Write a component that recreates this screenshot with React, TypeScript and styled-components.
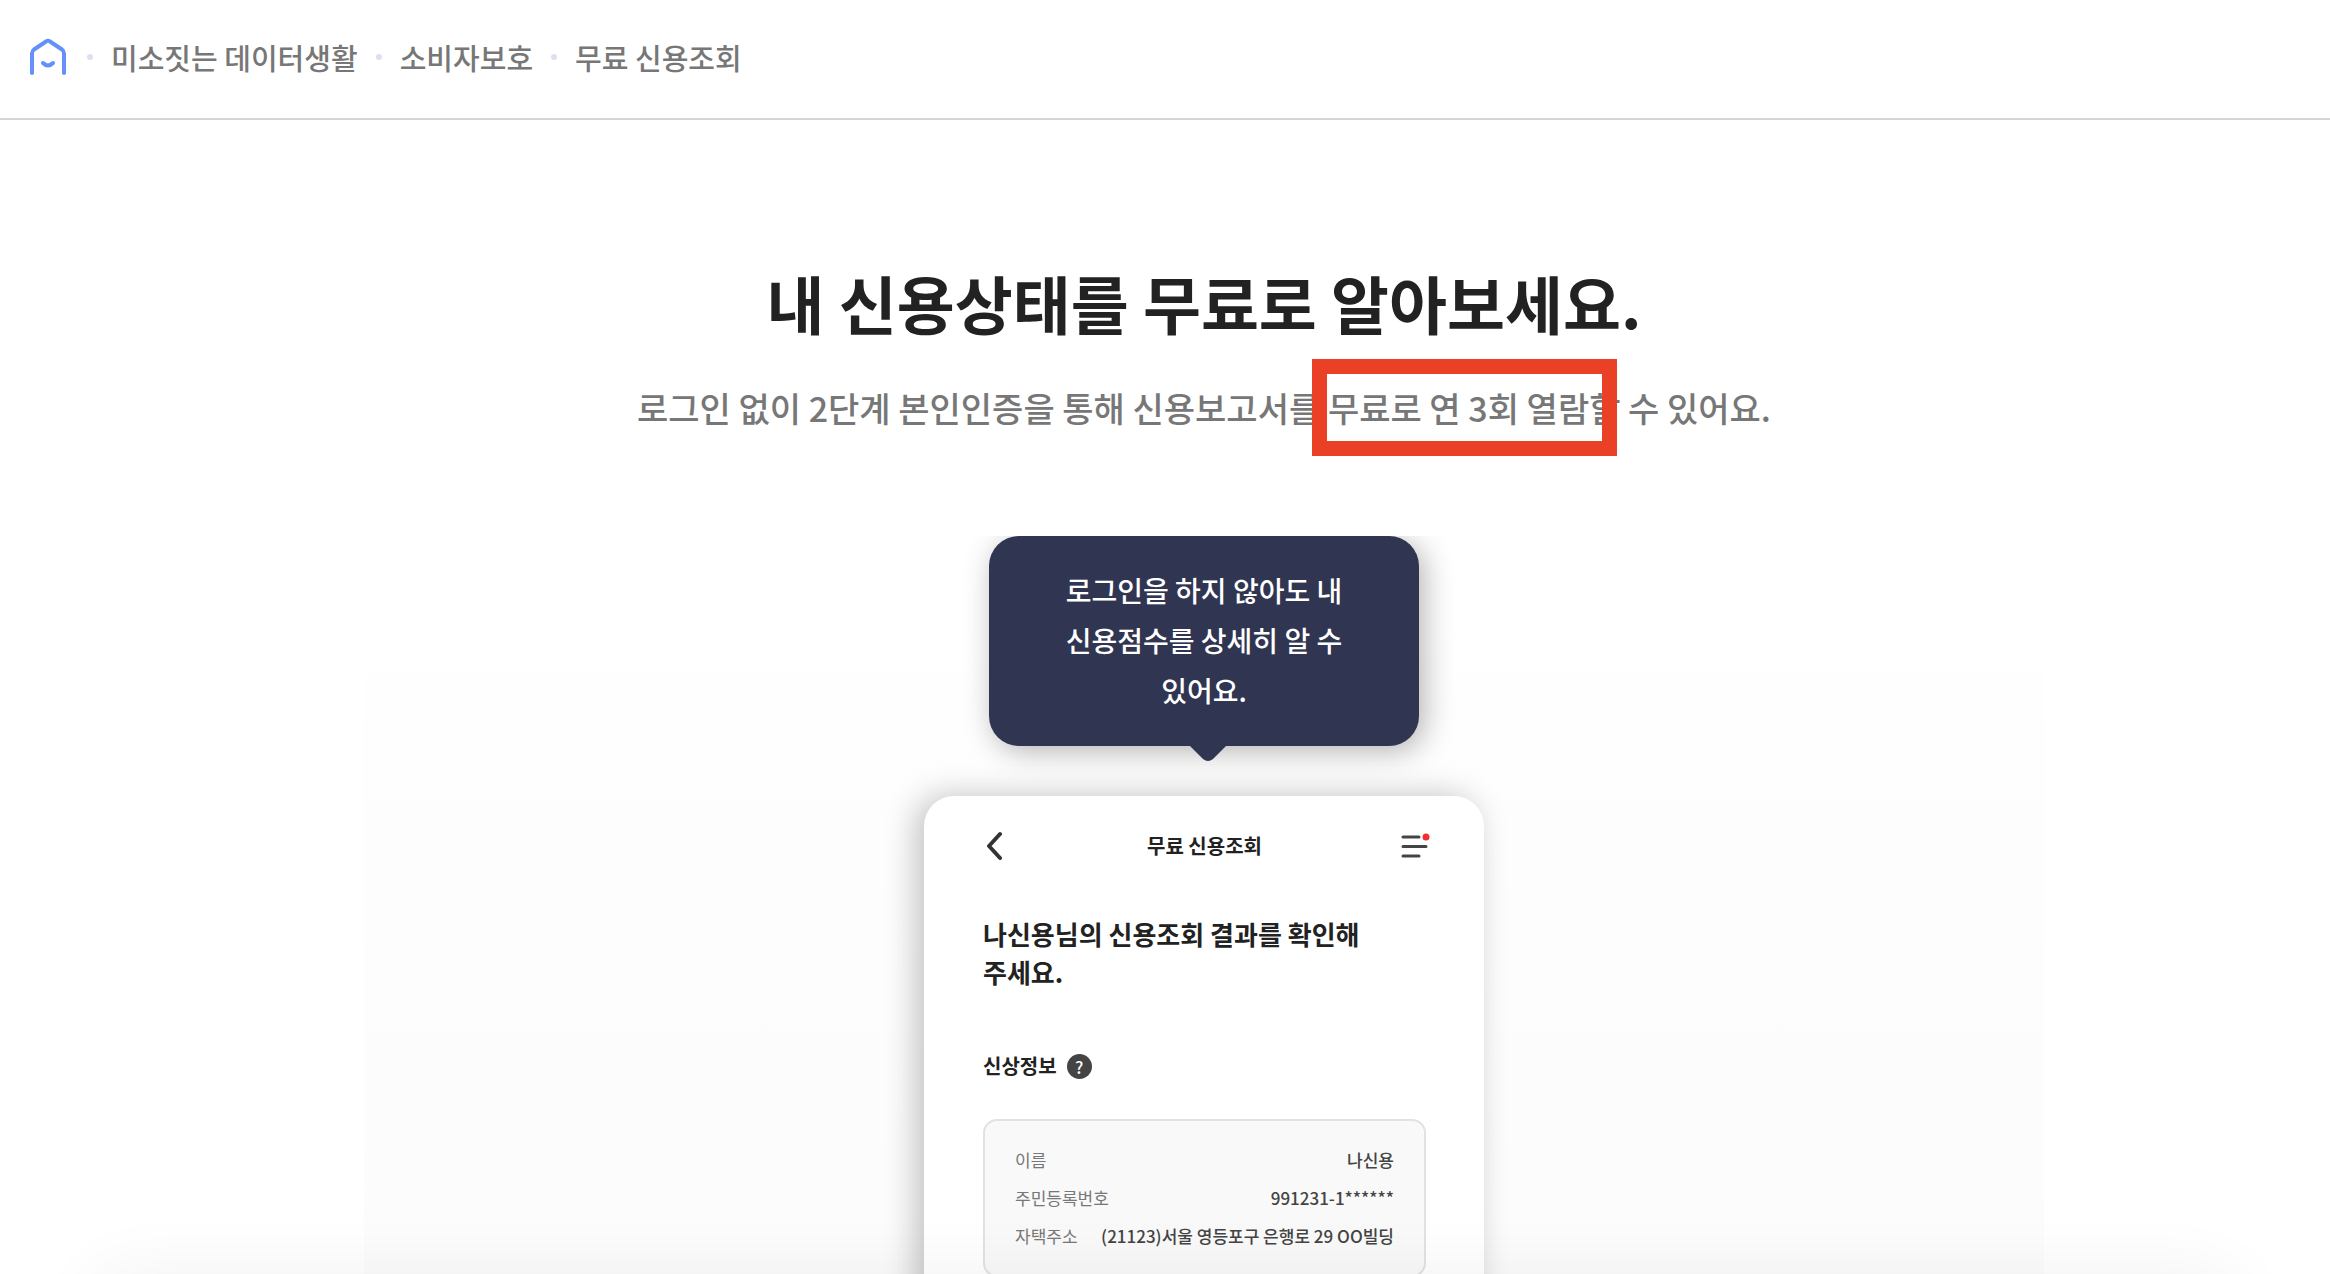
import React from 'react';
import styled, { createGlobalStyle } from 'styled-components';

const GlobalStyle = createGlobalStyle`
  *, *::before, *::after { box-sizing: border-box; }
  body {
    margin: 0;
    background: #fff;
    color: #222;
    font-family: "Noto Sans CJK KR", "Noto Sans", sans-serif;
    word-break: keep-all;
  }
  h1, h2, h3, p, dl, dt, dd, ol { margin: 0; padding: 0; }
  button { border: 0; padding: 0; background: none; font: inherit; color: inherit; cursor: pointer; }
`;

const Page = styled.div`
  position: relative;
  display: flex;
  flex-direction: column;
  height: 100vh;
  overflow: hidden;
`;

const Header = styled.header`
  flex: none;
  border-bottom: 2px solid #d6d6d6;
  padding: 32px 29px 36px;
`;

const Crumbs = styled.ol`
  display: flex;
  align-items: center;
  list-style: none;
`;

const Crumb = styled.li`
  display: flex;
  align-items: center;

  & + &::before {
    content: '';
    width: 6px;
    height: 6px;
    margin: 0 18px;
    border-radius: 50%;
    background: #dfdff2;
  }
`;

const CrumbLink = styled.a`
  display: flex;
  align-items: center;
  height: 50px;
  font-size: 29px;
  line-height: 50px;
  font-weight: 500;
  color: #777;
  text-decoration: none;
`;

const Main = styled.main`
  flex: 1 0 auto;
  display: flex;
  flex-direction: column;
  align-items: center;
  padding: 137px 0 0 78px;
`;

const Title = styled.h1`
  font-size: 63px;
  line-height: 90px;
  font-weight: 700;
`;

const Lead = styled.p`
  margin-top: 36px;
  font-size: 34px;
  line-height: 50px;
  font-weight: 500;
  color: #777;
`;

const Marked = styled.span`
  position: relative;

  &::after {
    content: '';
    position: absolute;
    inset: -24px -28px -24px -16px;
    border: 15px solid #ea4025;
  }
`;

const Stage = styled.section`
  display: flex;
  flex-direction: column;
  align-items: center;
  gap: 50px;
  width: 100%;
  max-width: 1680px;
  margin-top: 103px;
  padding-bottom: 60px;
  overflow: hidden;
  background: linear-gradient(#fff 100px, #fefefe 160px, #fdfdfd 400px, #fbfbfb 100%);
`;

const Bubble = styled.div`
  position: relative;
  z-index: 1;
  width: 430px;
  padding: 29px 60px 31px;
  border-radius: 30px;
  background: #303551;
  box-shadow: 5px 5px 30px rgba(0, 0, 0, 0.3);
  color: #fff;
  text-align: center;
  font-size: 28px;
  line-height: 50px;
  font-weight: 500;
`;

const Tail = styled.svg`
  position: absolute;
  top: 100%;
  left: 50%;
  width: 36px;
  height: 15px;
  margin-left: -14px;
  display: block;
`;

const Phone = styled.article`
  width: 560px;
  min-height: 700px;
  padding: 35px 58px 36px 59px;
  border-radius: 30px;
  background: #fff;
  box-shadow: -8px 0 32px rgba(0, 0, 0, 0.24);
`;

const PhoneBar = styled.div`
  display: grid;
  grid-template-columns: 1fr auto 1fr;
  align-items: center;
  height: 30px;
  margin: 0 -4px;
  padding-left: 8px;
`;

const PhoneTitle = styled.h2`
  margin-right: 8px;
  font-size: 20px;
  line-height: 30px;
  font-weight: 700;
`;

const IconButton = styled.button<{ $end?: boolean }>`
  display: flex;
  justify-self: ${(p) => (p.$end ? 'end' : 'start')};
`;

const Result = styled.p`
  margin-top: 54px;
  font-size: 26px;
  line-height: 38px;
  font-weight: 700;
`;

const SectionHead = styled.div`
  display: flex;
  align-items: center;
  gap: 10px;
  margin-top: 60px;
`;

const SectionTitle = styled.h3`
  font-size: 20px;
  line-height: 30px;
  font-weight: 700;
`;

const Help = styled.button`
  width: 25px;
  height: 25px;
  border-radius: 50%;
  background: #444;
  color: #fff;
  font-size: 17px;
  line-height: 25px;
  font-weight: 500;
`;

const Info = styled.dl`
  margin-top: 38px;
  padding: 20px 30px;
  border: 2px solid #e2e2e2;
  border-radius: 14px;
  background: #f9f9f9;
`;

const InfoRow = styled.div`
  display: flex;
  justify-content: space-between;
  font-size: 17px;
  line-height: 38px;
`;

const Label = styled.dt`
  color: #777;
`;

const Value = styled.dd`
  color: #444;
  font-weight: 500;
`;

const DockShadow = styled.div`
  position: absolute;
  z-index: 2;
  top: 100%;
  left: 90px;
  right: 90px;
  height: 80px;
  border-radius: 40px;
  box-shadow: 0 0 70px rgba(0, 0, 0, 0.06);
`;

const trail = ['미소짓는 데이터생활', '소비자보호', '무료 신용조회'];

const info = [
  ['이름', '나신용'],
  ['주민등록번호', '991231-1******'],
  ['자택주소', '(21123)서울 영등포구 은행로 29 OO빌딩'],
];

function HomeIcon() {
  return (
    <svg width="40" height="40" viewBox="0 0 40 40" fill="none" stroke="#6490fa" strokeWidth="4" strokeLinecap="round" strokeLinejoin="round">
      <path d="M3 36V16.500Q3 14 5 12.500L17 4.500Q19 3 21 4.500L33 12.500Q35 14 35 16.500V36" />
      <path d="M14 26Q19 31 24 26" />
    </svg>
  );
}

function BackIcon() {
  return (
    <svg width="16" height="30" viewBox="0 0 16 30" fill="none" stroke="#333" strokeWidth="4" strokeLinecap="round" strokeLinejoin="round">
      <path d="M13 3L2 15L13 27" />
    </svg>
  );
}

function MenuIcon() {
  return (
    <svg width="30" height="30" viewBox="0 0 30 30">
      <path d="M3 6H19M3 15.500H26M3 25H19" stroke="#444" strokeWidth="3" strokeLinecap="round" />
      <circle cx="26" cy="6" r="3.500" fill="#f0302c" />
    </svg>
  );
}

export default function App() {
  return (
    <>
      <GlobalStyle />
      <Page>
        <Header>
          <nav aria-label="현재 위치">
            <Crumbs>
              <Crumb>
                <CrumbLink href="#" aria-label="홈">
                  <HomeIcon />
                </CrumbLink>
              </Crumb>
              {trail.map((name) => (
                <Crumb key={name}>
                  <CrumbLink href="#">{name}</CrumbLink>
                </Crumb>
              ))}
            </Crumbs>
          </nav>
        </Header>

        <Main>
          <Title>내 신용상태를 무료로 알아보세요.</Title>
          <Lead>
            로그인 없이 2단계 본인인증을 통해 신용보고서를 <Marked>무료로 연 3회 열람</Marked>할 수 있어요.
          </Lead>

          <Stage>
            <Bubble>
              로그인을 하지 않아도 내 신용점수를 상세히 알 수 있어요.
              <Tail viewBox="0 0 36 15" aria-hidden="true">
                <path d="M0 0H36L23 13Q18 17 13 13Z" fill="#303551" />
              </Tail>
            </Bubble>

            <Phone>
              <PhoneBar>
                <IconButton type="button" aria-label="뒤로">
                  <BackIcon />
                </IconButton>
                <PhoneTitle>무료 신용조회</PhoneTitle>
                <IconButton type="button" aria-label="메뉴" $end>
                  <MenuIcon />
                </IconButton>
              </PhoneBar>
              <Result>나신용님의 신용조회 결과를 확인해 주세요.</Result>
              <SectionHead>
                <SectionTitle>신상정보</SectionTitle>
                <Help type="button">?</Help>
              </SectionHead>
              <Info>
                {info.map(([label, value]) => (
                  <InfoRow key={label}>
                    <Label>{label}</Label>
                    <Value>{value}</Value>
                  </InfoRow>
                ))}
              </Info>
            </Phone>
          </Stage>
        </Main>
        <DockShadow />
      </Page>
    </>
  );
}
